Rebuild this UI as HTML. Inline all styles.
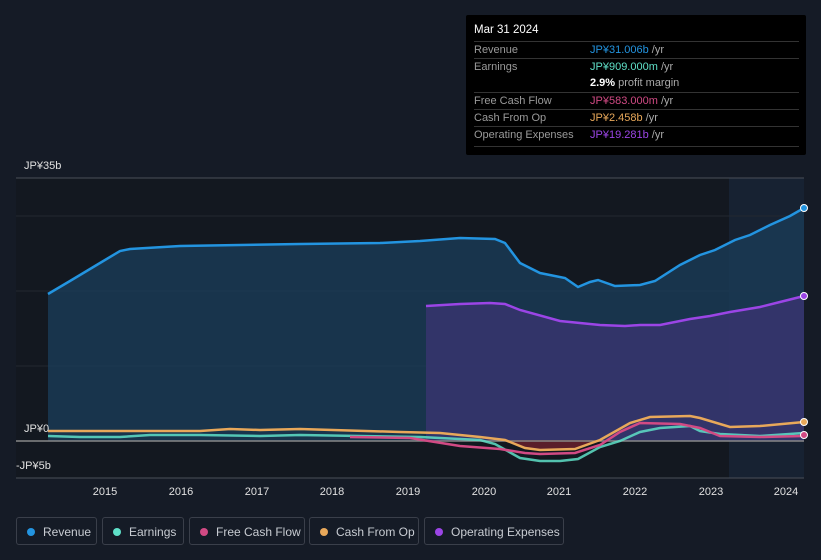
<!DOCTYPE html>
<html><head><meta charset="utf-8"><style>
body{margin:0;width:821px;height:560px;background:#151b26;font-family:"Liberation Sans","Noto Sans CJK JP",sans-serif;overflow:hidden;position:relative}
.tt{position:absolute;left:466px;top:15px;width:340px;height:140px;background:#000;border-radius:2px;font-size:11px}
.tt .h{position:absolute;left:8px;top:9px;color:#fff;font-size:11.5px}
.row{position:absolute;left:8px;width:325px;height:17px;border-top:1px solid #333;color:#9a9a9a;line-height:17px}
.row span{position:absolute;left:116px}
.lg{position:absolute;top:517px;height:28px;border:1px solid #3a3f4a;border-radius:3px;color:#c8ccd2;font-size:12px;line-height:28px;box-sizing:border-box}
.lg i{display:inline-block;width:8px;height:8px;border-radius:50%;margin:0 8px 0 10px;vertical-align:-0px}
.ax{position:absolute;color:#e0e0e0;font-size:11px}
</style></head><body>
<svg width="821" height="560" style="position:absolute;left:0;top:0">
<rect x="16" y="178" width="788" height="300" fill="#131820"/>
<rect x="729" y="178" width="75" height="300" fill="#172232"/>
<line x1="16" y1="178" x2="804" y2="178" stroke="#4a4f58"/>
<line x1="16" y1="216" x2="804" y2="216" stroke="#232830"/>
<line x1="16" y1="291" x2="804" y2="291" stroke="#232830"/>
<line x1="16" y1="366" x2="804" y2="366" stroke="#232830"/>
<line x1="16" y1="478" x2="804" y2="478" stroke="#4a4f58"/>
<path d="M48,294 L70,281 L100,263 L120,251 L130,249 L180,246 L240,245 L300,244 L380,243 L420,241 L460,238 L495,239 L505,243 L520,263 L540,273 L565,278 L578,287 L590,282 L598,280 L615,286 L640,285 L655,281 L680,265 L700,255 L715,250 L735,240 L750,235 L770,225 L790,216 L804,208 L804,441 L48,441Z" fill="#1a3a55" opacity="0.85"/>
<path d="M426,306 L460,304 L490,303 L505,304 L520,310 L560,321 L600,325 L625,326 L640,325 L660,325 L690,319 L710,316 L730,312 L760,307 L780,302 L804,296 L804,441 L426,441Z" fill="#3a3470" opacity="0.8"/>
<path d="M480,440 L505,440 L525,448 L540,450 L575,449 L600,440Z" fill="#5a1e2a"/>
<line x1="16" y1="441" x2="804" y2="441" stroke="#888" stroke-width="1.5"/>
<path d="M48,294 L70,281 L100,263 L120,251 L130,249 L180,246 L240,245 L300,244 L380,243 L420,241 L460,238 L495,239 L505,243 L520,263 L540,273 L565,278 L578,287 L590,282 L598,280 L615,286 L640,285 L655,281 L680,265 L700,255 L715,250 L735,240 L750,235 L770,225 L790,216 L804,208" fill="none" stroke="#2394e0" stroke-width="2.5"/>
<path d="M426,306 L460,304 L490,303 L505,304 L520,310 L560,321 L600,325 L625,326 L640,325 L660,325 L690,319 L710,316 L730,312 L760,307 L780,302 L804,296" fill="none" stroke="#9b45e6" stroke-width="2.5"/>
<path d="M48,436 L80,437 L120,437 L150,435 L200,435 L260,436 L300,435 L360,436 L420,437 L480,440 L495,444 L520,458 L540,461 L560,461 L578,459 L600,447 L620,441 L640,432 L660,428 L690,426 L700,431 L720,434 L760,436 L804,433" fill="none" stroke="#5fe0c8" stroke-width="2.5" opacity="0.85"/>
<path d="M350,437 L410,438 L460,446 L500,449 L525,453 L540,454 L575,453 L600,445 L620,432 L640,423 L680,424 L700,428 L720,436 L760,437 L804,436" fill="none" stroke="#d14a84" stroke-width="2.5"/>
<path d="M48,431 L200,431 L230,429 L260,430 L300,429 L400,432 L440,433 L480,437 L505,440 L525,448 L540,450 L575,449 L600,440 L630,423 L650,417 L690,416 L700,418 L730,427 L760,426 L804,422" fill="none" stroke="#e8a85a" stroke-width="2.5"/>
<circle cx="804" cy="208" r="3.5" fill="#2394e0" stroke="#fff" stroke-width="1"/>
<circle cx="804" cy="296" r="3.5" fill="#9b45e6" stroke="#fff" stroke-width="1"/>
<circle cx="804" cy="422" r="3.5" fill="#e8a85a" stroke="#fff" stroke-width="1"/>
<circle cx="804" cy="435" r="3.5" fill="#d14a84" stroke="#fff" stroke-width="1"/>
<g fill="#e0e0e0" font-size="11" font-family="Liberation Sans" text-anchor="middle">
<text x="105" y="495">2015</text><text x="181" y="495">2016</text><text x="257" y="495">2017</text><text x="332" y="495">2018</text><text x="408" y="495">2019</text><text x="484" y="495">2020</text><text x="559" y="495">2021</text><text x="635" y="495">2022</text><text x="711" y="495">2023</text><text x="786" y="495">2024</text>
</g>
</svg>
<div class="ax" style="left:24px;top:160px">JP¥35b</div>
<div class="ax" style="left:24px;top:423px">JP¥0</div>
<div class="ax" style="left:16px;top:460px">-JP¥5b</div>
<div class="tt"><div class="h">Mar 31 2024</div>
<div class="row" style="top:26px">Revenue<span style="color:#2394e0">JP¥31.006b <b style="color:#aaa;font-weight:normal">/yr</b></span></div>
<div class="row" style="top:43px">Earnings<span style="color:#5fe0c8">JP¥909.000m <b style="color:#aaa;font-weight:normal">/yr</b></span></div>
<div class="row" style="top:60px;border-top:none"><span style="color:#fff;font-weight:bold">2.9% <b style="color:#aaa;font-weight:normal">profit margin</b></span></div>
<div class="row" style="top:77px">Free Cash Flow<span style="color:#d14a84">JP¥583.000m <b style="color:#aaa;font-weight:normal">/yr</b></span></div>
<div class="row" style="top:94px">Cash From Op<span style="color:#e8a85a">JP¥2.458b <b style="color:#aaa;font-weight:normal">/yr</b></span></div>
<div class="row" style="top:111px">Operating Expenses<span style="color:#9b45e6">JP¥19.281b <b style="color:#aaa;font-weight:normal">/yr</b></span></div>
<div class="row" style="top:131px;height:0"></div>
</div>
<div class="lg" style="left:16px;width:81px"><i style="background:#2394e0"></i>Revenue</div>
<div class="lg" style="left:102px;width:82px"><i style="background:#5fe0c8"></i>Earnings</div>
<div class="lg" style="left:189px;width:116px"><i style="background:#d14a84"></i>Free Cash Flow</div>
<div class="lg" style="left:309px;width:110px"><i style="background:#e8a85a"></i>Cash From Op</div>
<div class="lg" style="left:424px;width:140px"><i style="background:#9b45e6"></i>Operating Expenses</div>
</body></html>
